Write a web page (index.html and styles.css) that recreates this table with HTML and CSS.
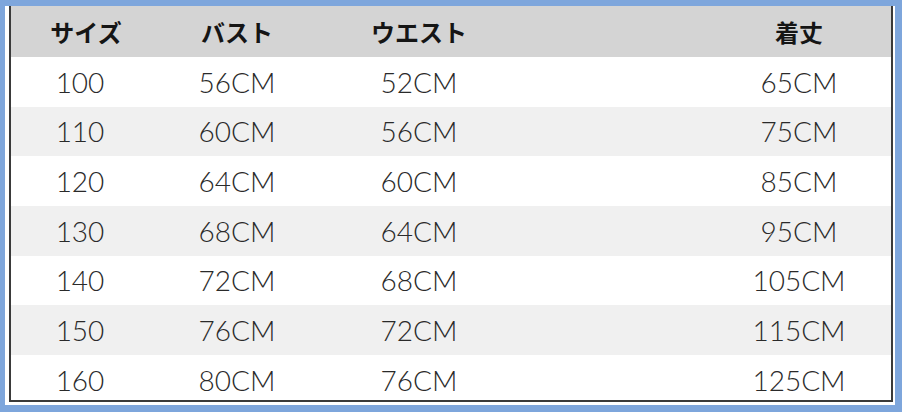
FILE: index.html
```html
<!DOCTYPE html>
<html lang="ja">
<head>
<meta charset="utf-8">
<title>サイズ表</title>
<link rel="stylesheet" href="styles.css">
</head>
<body>
<div class="frame">
  <div class="table">
    <div class="row head">
      <div class="cell c1">サイズ</div><div class="cell">バスト</div><div class="cell">ウエスト</div><div class="cell"></div><div class="cell">着丈</div>
    </div>
    <div class="row">
      <div class="cell">100</div><div class="cell">56CM</div><div class="cell">52CM</div><div class="cell"></div><div class="cell">65CM</div>
    </div>
    <div class="row alt">
      <div class="cell">110</div><div class="cell">60CM</div><div class="cell">56CM</div><div class="cell"></div><div class="cell">75CM</div>
    </div>
    <div class="row">
      <div class="cell">120</div><div class="cell">64CM</div><div class="cell">60CM</div><div class="cell"></div><div class="cell">85CM</div>
    </div>
    <div class="row alt">
      <div class="cell">130</div><div class="cell">68CM</div><div class="cell">64CM</div><div class="cell"></div><div class="cell">95CM</div>
    </div>
    <div class="row">
      <div class="cell">140</div><div class="cell">72CM</div><div class="cell">68CM</div><div class="cell"></div><div class="cell">105CM</div>
    </div>
    <div class="row alt">
      <div class="cell">150</div><div class="cell">76CM</div><div class="cell">72CM</div><div class="cell"></div><div class="cell">115CM</div>
    </div>
    <div class="row">
      <div class="cell">160</div><div class="cell">80CM</div><div class="cell">76CM</div><div class="cell"></div><div class="cell">125CM</div>
    </div>
  </div>
</div>
</body>
</html>
```
FILE: styles.css
```css
html, body {
  margin: 0;
  padding: 0;
}
body {
  background: #7ea6dc;
  width: 902px;
  height: 412px;
  overflow: hidden;
  padding-top: 6px;
  box-sizing: border-box;
}
.frame {
  margin-left: 5px;
  width: 890px;
  box-sizing: border-box;
  padding: 0 2px 3px 4px;
  background: #ffffff;
}
.table {
  box-sizing: border-box;
  width: 884px;
  height: 396px;
  border-left: 2px solid #3a3a3a;
  border-right: 2px solid #3a3a3a;
  border-bottom: 2px solid #3a3a3a;
  overflow: hidden;
  background: #ffffff;
}
.row {
  display: grid;
  grid-template-columns: 138px 176px 188px 194px 184px;
  height: 49.67px;
  align-items: center;
  font-family: "Lato", "Liberation Sans", sans-serif;
  font-weight: 300;
  font-size: 28px;
  color: #2a2a2a;
}
.row.alt {
  background: #f0f0f0;
}
.row.head {
  height: 51px;
  background: #d4d4d4;
  font-family: "Noto Sans CJK JP", sans-serif;
  font-weight: 700;
  font-size: 24px;
  color: #151515;
}
.cell {
  text-align: center;
  line-height: 1;
  white-space: nowrap;
}
.head .c1 {
  padding-left: 12px;
}
```
